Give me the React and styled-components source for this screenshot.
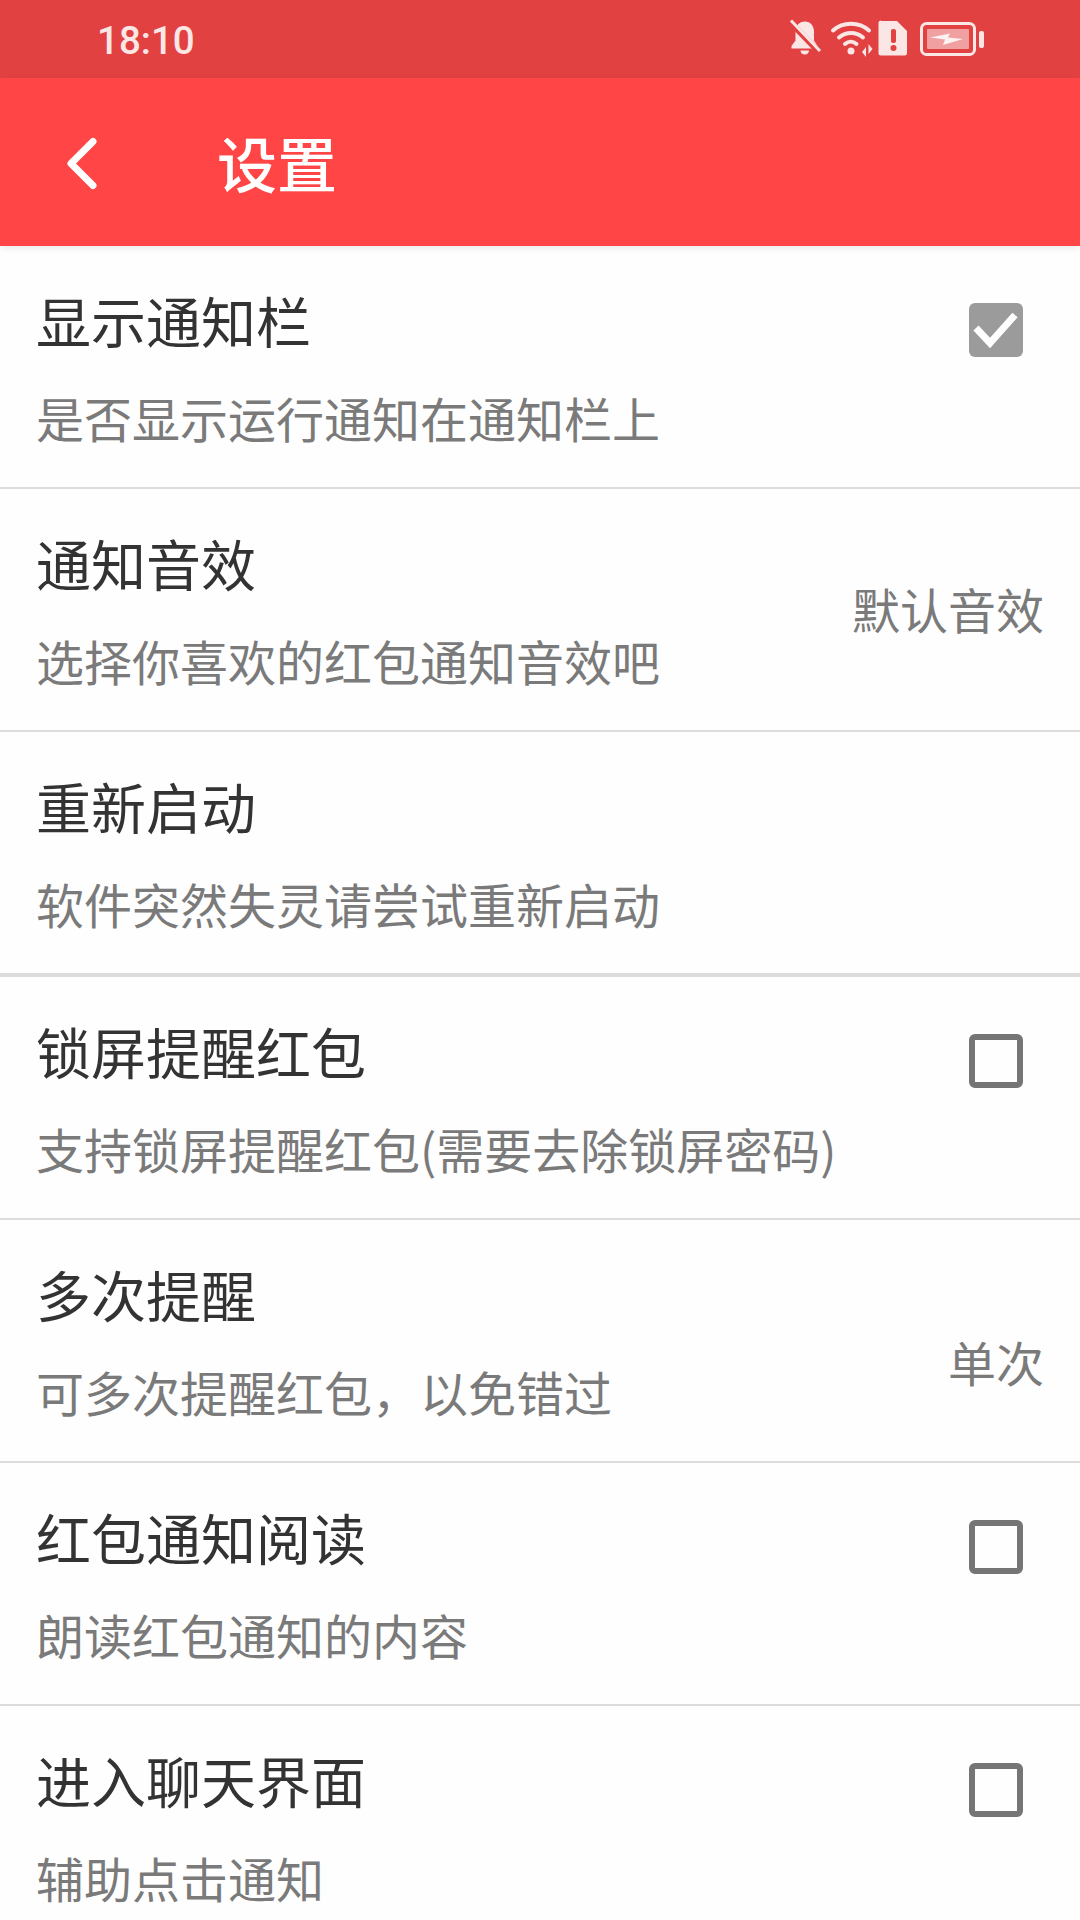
import React from 'react';
import styled, { createGlobalStyle } from 'styled-components';

const GlobalStyle = createGlobalStyle`
  html, body {
    margin: 0;
    padding: 0;
    background: #fff;
  }
  * { box-sizing: border-box; }
`;

const Page = styled.div`
  width: 1080px;
  height: 1920px;
  overflow: hidden;
  background: #fefefe;
  font-family: "Noto Sans CJK SC", "Noto Sans", sans-serif;
`;

const StatusBar = styled.div`
  height: 78px;
  background: #e24141;
  display: flex;
  align-items: center;
  padding: 3px 96px 0 97px;
  justify-content: space-between;
`;

const Clock = styled.div`
  font-family: Roboto, sans-serif;
  font-size: 38.5px;
  font-weight: 500;
  color: #fbe6e6;
`;

const StatusIcons = styled.svg`
  display: block;
  margin-top: -3px;
`;

const AppBar = styled.div`
  height: 168px;
  background: #ff4545;
  display: flex;
  align-items: center;
  box-shadow: 0 2px 7px rgba(0, 0, 0, 0.08);
  position: relative;
`;

const BackIcon = styled.svg`
  margin-left: 65px;
  flex: none;
`;

const Title = styled.div`
  margin-left: 116px;
  font-size: 60px;
  line-height: 80px;
  font-weight: 500;
  color: #fff;
`;

const Row = styled.div`
  height: ${(p) => (p.$thick ? 245 : 243)}px;
  border-bottom: ${(p) => (p.$thick ? 4 : 2)}px solid #dcdcdc;
  padding: 0 36px;
  display: flex;
  justify-content: space-between;
  align-items: center;
`;

const Texts = styled.div`
  align-self: flex-start;
  padding-top: 41px;
`;

const RowTitle = styled.div`
  font-size: 55px;
  line-height: 64px;
  color: #333;
`;

const RowSub = styled.div`
  font-size: 48px;
  line-height: 60px;
  margin-top: 36px;
  color: #7a7a7a;
`;

const RowValue = styled.div`
  font-size: 48px;
  line-height: 60px;
  color: #7a7a7a;
  margin-top: ${(p) => p.$offset}px;
`;

const Box = styled.div`
  width: 54px;
  height: 54px;
  margin: 57px 21px 0 0;
  align-self: flex-start;
  border-radius: 6px;
  border: ${(p) => (p.$checked ? 'none' : '6px solid #757575')};
  background: ${(p) => (p.$checked ? '#9b9b9b' : 'transparent')};
`;

const CheckMark = styled.svg`
  display: block;
`;

const rows = [
  { title: '显示通知栏', sub: '是否显示运行通知在通知栏上', checked: true },
  { title: '通知音效', sub: '选择你喜欢的红包通知音效吧', value: '默认音效', offset: -4 },
  { title: '重新启动', sub: '软件突然失灵请尝试重新启动', thick: true },
  { title: '锁屏提醒红包', sub: '支持锁屏提醒红包(需要去除锁屏密码)', checked: false },
  { title: '多次提醒', sub: '可多次提醒红包，以免错过', value: '单次', offset: 40 },
  { title: '红包通知阅读', sub: '朗读红包通知的内容', checked: false },
  { title: '进入聊天界面', sub: '辅助点击通知', checked: false },
];

const StatusGlyphs = () => (
  <StatusIcons width="196" height="40" viewBox="0 0 196 40" fill="none">
    {/* bell off */}
    <path d="M17 2.500c-6 0-9.500 4.500-9.500 10v9L3.500 27v2.500h26V27L26 21.500v-9c0-5.500-3.500-10-9-10z" fill="#fbe6e6" />
    <path d="M12.500 31.500h8.500c0 2.500-2 4-4.250 4s-4.250-1.500-4.250-4z" fill="#fbe6e6" />
    <path d="M2 3l29 30" stroke="#e24141" strokeWidth="6" />
    <path d="M3 1.500l29 30.500" stroke="#fbe6e6" strokeWidth="3" />
    {/* wifi */}
    <path d="M45 11.500c10-9 26-9 36 0" stroke="#fbe6e6" strokeWidth="4" strokeLinecap="round" />
    <path d="M51 18.500c7-6 17-6 24 0" stroke="#fbe6e6" strokeWidth="4" strokeLinecap="round" />
    <path d="M57 25c3.500-3 8-3 11.500 0" stroke="#fbe6e6" strokeWidth="4" strokeLinecap="round" />
    <circle cx="63" cy="32" r="3.500" fill="#fbe6e6" />
    <path d="M74 33l4-5v10zM80.500 25v10l4-5z" fill="#fbe6e6" />
    {/* sim alert */}
    <path d="M93 2h16l10 10v22a2.500 2.500 0 0 1-2.500 2.500h-23.500a2.500 2.500 0 0 1-2.500-2.500v-30a2.500 2.500 0 0 1 2.500-2.500z" fill="#fbe6e6" />
    <rect x="103" y="10" width="5" height="14" rx="2" fill="#e24141" />
    <circle cx="105.500" cy="29" r="3" fill="#e24141" />
    {/* battery */}
    <rect x="133.500" y="4.500" width="53" height="31" rx="5" stroke="#fbe6e6" strokeWidth="3" />
    <rect x="139" y="10" width="42" height="20" rx="1" fill="#f0a0a0" />
    <path d="M142 18.500l20-4-2 4 15 1.500-20 6 2-5.500z" fill="#fdf2f2" />
    <rect x="191" y="12" width="5" height="17" rx="2" fill="#fbe6e6" />
  </StatusIcons>
);

const App = () => (
  <Page>
    <GlobalStyle />
    <StatusBar>
      <Clock>18:10</Clock>
      <StatusGlyphs />
    </StatusBar>
    <AppBar>
      <BackIcon width="36" height="56" viewBox="0 0 36 56" fill="none">
        <path d="M28 7.500L6 29.500l22 22" stroke="#fff" strokeWidth="7" strokeLinecap="round" strokeLinejoin="round" />
      </BackIcon>
      <Title>设置</Title>
    </AppBar>
    {rows.map((row) => (
      <Row key={row.title} $thick={row.thick}>
        <Texts>
          <RowTitle>{row.title}</RowTitle>
          <RowSub>{row.sub}</RowSub>
        </Texts>
        {row.value && <RowValue $offset={row.offset}>{row.value}</RowValue>}
        {row.checked !== undefined && (
          <Box $checked={row.checked}>
            {row.checked && (
              <CheckMark width="54" height="54" viewBox="0 0 54 54" fill="none">
                <path d="M7 25l14 15 25-28" stroke="#fff" strokeWidth="7" />
              </CheckMark>
            )}
          </Box>
        )}
      </Row>
    ))}
  </Page>
);

export default App;
